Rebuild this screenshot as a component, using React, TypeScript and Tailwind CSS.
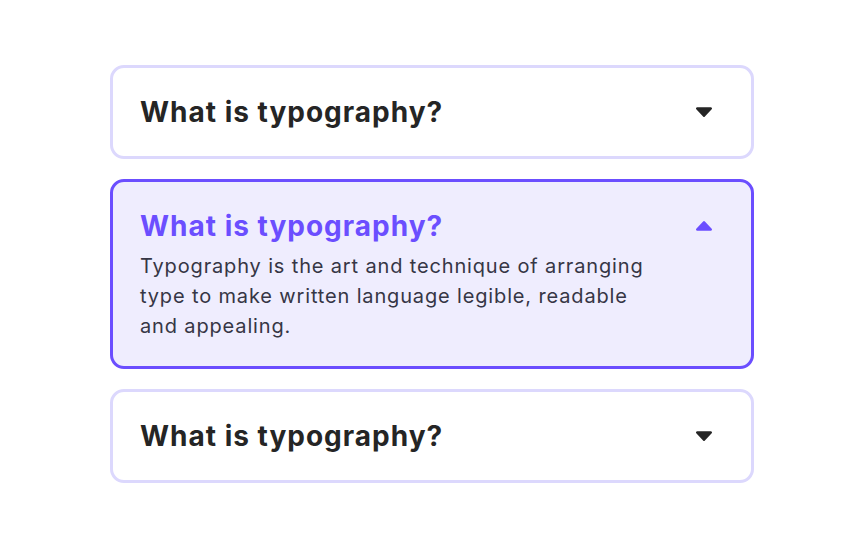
import React from "react";

const Arrow = ({ up, color }: { up?: boolean; color: string }) => (
  <svg width="18" height="12" viewBox="0 0 18 12" className={up ? "rotate-180" : ""}>
    <path
      d="M2.2 1.2 H15.8 a1.2 1.2 0 0 1 0.9 2 L9.9 10.4 a1.2 1.2 0 0 1 -1.8 0 L1.3 3.2 a1.2 1.2 0 0 1 0.9 -2 Z"
      fill={color}
    />
  </svg>
);

export default function App() {
  const title = "What is typography?";
  return (
    <div
      className="w-[864px] h-[540px] bg-white flex flex-col items-center pt-[65px] gap-[20px]"
      style={{ fontFamily: "Inter, 'Noto Sans', sans-serif" }}
    >
      <div className="w-[644px] border-[3px] border-[#dcd8fd] rounded-[14px] bg-white pl-[27px] pr-[38px] pt-[26px] pb-[26px]">
        <div className="flex items-center justify-between h-[36px]">
          <h2 className="text-[28px] leading-[36px] font-bold text-[#252525] tracking-[1px]">{title}</h2>
          <Arrow color="#252525" />
        </div>
      </div>

      <div className="w-[644px] border-[3px] border-[#6b4eff] rounded-[14px] bg-[#efedfe] pl-[27px] pr-[38px] pt-[26px] pb-[25px]">
        <div className="flex items-center justify-between h-[36px]">
          <h2 className="text-[28px] leading-[36px] font-bold text-[#6b4eff] tracking-[1px]">{title}</h2>
          <Arrow up color="#6b4eff" />
        </div>
        <p className="mt-[7px] w-[530px] text-[20px] leading-[30px] tracking-[0.85px] text-[#363645]">
          Typography is the art and technique of arranging type to make written language legible, readable and appealing.
        </p>
      </div>

      <div className="w-[644px] border-[3px] border-[#dcd8fd] rounded-[14px] bg-white pl-[27px] pr-[38px] pt-[26px] pb-[26px]">
        <div className="flex items-center justify-between h-[36px]">
          <h2 className="text-[28px] leading-[36px] font-bold text-[#252525] tracking-[1px]">{title}</h2>
          <Arrow color="#252525" />
        </div>
      </div>
    </div>
  );
}
